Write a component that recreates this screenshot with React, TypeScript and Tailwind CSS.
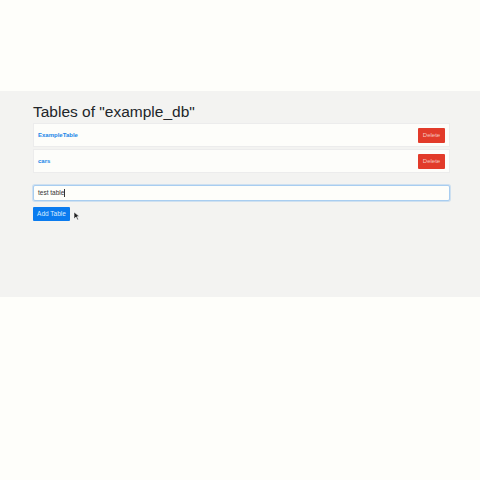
import React from "react";

export default function App() {
  return (
    <div
      className="w-[480px] h-[480px] bg-[#fefefa] flex flex-col"
      style={{ fontFamily: '"Liberation Sans", Arial, sans-serif' }}
    >
      <div className="h-[91px] shrink-0" />
      <div className="h-[206px] bg-[#f3f3f1] pl-[33px] pr-[30px] pt-[12px] flex flex-col">
        <h1 className="text-[15.5px] leading-[18px] text-[#212529] h-[20px]">Tables of "example_db"</h1>
        <div className="flex flex-col gap-[2px]">
          <div className="h-[24px] bg-[#fdfdfa] border border-[#ececec] flex items-center justify-between pl-[4px] pr-[4px]">
            <a className="text-[6px] font-bold text-[#1a86e8]">ExampleTable</a>
            <button className="h-[15px] w-[27px] bg-[#e23b2a] text-[#f6c8c0] text-[6px] rounded-[1px] flex items-center justify-center">Delete</button>
          </div>
          <div className="h-[24px] bg-[#fdfdfa] border border-[#ececec] flex items-center justify-between pl-[4px] pr-[4px]">
            <a className="text-[6px] font-bold text-[#1a86e8]">cars</a>
            <button className="h-[15px] w-[27px] bg-[#e23b2a] text-[#f6c8c0] text-[6px] rounded-[1px] flex items-center justify-center">Delete</button>
          </div>
        </div>
        <div className="mt-[12px] h-[16px] border border-[#a8cdf0] rounded-[2px] bg-[#fefefa] flex items-center pl-[4px] shadow-[0_0_0_1px_rgba(170,205,240,0.5)]">
          <span className="text-[6.5px] text-[#333]">test table</span>
          <span className="w-px h-[8px] bg-[#333]" />
        </div>
        <div className="mt-[6px] flex items-center">
          <button className="h-[14px] w-[37px] bg-[#0a7bef] text-[#d8ecff] text-[6.5px] rounded-[1px] flex items-center justify-center">Add Table</button>
          <svg width="8" height="10" viewBox="0 0 8 10" className="ml-[3px] mt-[3px]">
            <path d="M1 1 L1 8 L3 6 L4.5 9 L5.5 8.5 L4.2 5.6 L6.5 5.6 Z" fill="#222" stroke="#fff" strokeWidth="0.6" />
          </svg>
        </div>
      </div>
      <div className="flex-1" />
    </div>
  );
}
